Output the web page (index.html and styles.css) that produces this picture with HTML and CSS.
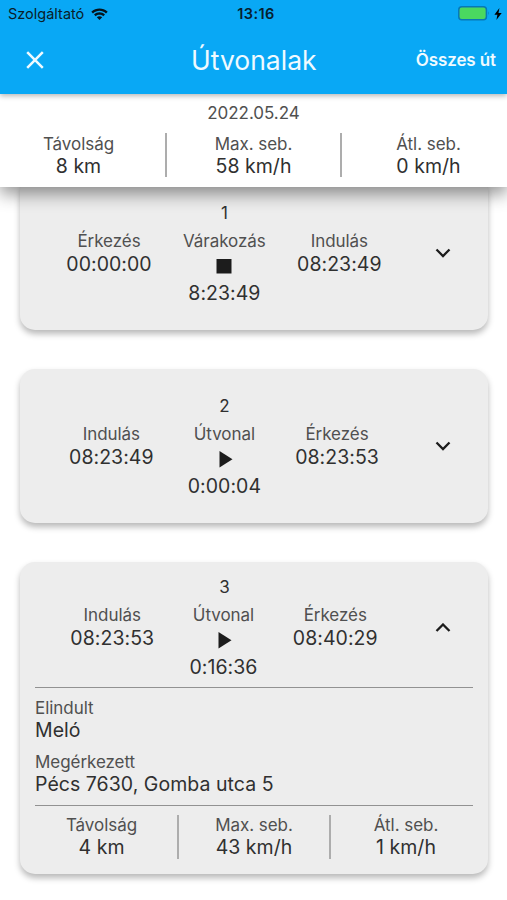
FILE: index.html
```html
<!DOCTYPE html>
<html lang="hu">
<head>
<meta charset="utf-8">
<meta name="viewport" content="width=device-width, initial-scale=1">
<title>Útvonalak</title>
<link rel="stylesheet" href="styles.css">
</head>
<body>
<div class="app">
  <header class="appbar">
    <div class="status">
      <div class="carrier"><span>Szolgáltató</span>
        <svg class="wifi" viewBox="0 0 17 12"><path d="M.3 3.700C5-.7 12-.7 16.700 3.700L15 5.400C11.300 2 5.700 2 2 5.400ZM3 6.500C6.200 3.600 10.800 3.600 14 6.500L12.300 8.200C10.100 6.300 6.900 6.300 4.700 8.200ZM5.800 9.200C7.400 7.900 9.600 7.900 11.200 9.200L8.500 11.900Z"/></svg>
      </div>
      <span class="clock">13:16</span>
      <div class="power">
        <svg class="battery" viewBox="0 0 32 15"><rect x=".8" y=".8" width="27.600" height="12.900" rx="3" fill="#4ad860" stroke="#0878b4" stroke-width="1.500"/><path d="M30 5.200Q31.600 7.200 30 9.200Z" fill="#0878b4"/></svg>
        <svg class="bolt" viewBox="0 0 8 12"><path d="M5.400 0L.4 6.800H3.400L2.400 12L7.700 5.100H4.500Z"/></svg>
      </div>
    </div>
    <div class="toolbar">
      <svg class="close" viewBox="0 0 18 18"><path d="M1.200 1.200L16.800 16.800M16.800 1.200L1.200 16.800"/></svg>
      <h1 class="title">Útvonalak</h1>
      <span class="action">Összes út</span>
    </div>
  </header>

  <section class="summary">
    <div class="label date">2022.05.24</div>
    <div class="stats stats-top">
      <div class="stat"><span class="label">Távolság</span><span class="value">8 km</span></div>
      <div class="stat"><span class="label">Max. seb.</span><span class="value">58 km/h</span></div>
      <div class="stat"><span class="label">Átl. seb.</span><span class="value">0 km/h</span></div>
    </div>
  </section>

  <main class="list">
    <article class="card">
      <div class="number">1</div>
      <div class="row">
        <div class="times">
          <div class="cell"><span class="label">Érkezés</span><span class="value">00:00:00</span></div>
          <div class="cell"><span class="label">Várakozás</span><svg class="mark" viewBox="0 0 24 24"><path d="M4.500 5H19.500V19.500H4.500Z"/></svg><span class="value">8:23:49</span></div>
          <div class="cell"><span class="label">Indulás</span><span class="value">08:23:49</span></div>
        </div>
        <svg class="chevron" viewBox="0 0 16 10"><path d="M1.500 1.500L8 8L14.500 1.500"/></svg>
      </div>
    </article>

    <article class="card">
      <div class="number">2</div>
      <div class="row">
        <div class="times">
          <div class="cell"><span class="label">Indulás</span><span class="value">08:23:49</span></div>
          <div class="cell"><span class="label">Útvonal</span><svg class="mark" viewBox="0 0 24 24"><path d="M7.500 4L20.500 12.200L7.500 20.500Z"/></svg><span class="value">0:00:04</span></div>
          <div class="cell"><span class="label">Érkezés</span><span class="value">08:23:53</span></div>
        </div>
        <svg class="chevron" viewBox="0 0 16 10"><path d="M1.500 1.500L8 8L14.500 1.500"/></svg>
      </div>
    </article>

    <article class="card open">
      <div class="number">3</div>
      <div class="row">
        <div class="times">
          <div class="cell"><span class="label">Indulás</span><span class="value">08:23:53</span></div>
          <div class="cell"><span class="label">Útvonal</span><svg class="mark" viewBox="0 0 24 24"><path d="M7.500 4L20.500 12.200L7.500 20.500Z"/></svg><span class="value">0:16:36</span></div>
          <div class="cell"><span class="label">Érkezés</span><span class="value">08:40:29</span></div>
        </div>
        <svg class="chevron" viewBox="0 0 16 10"><path d="M1.500 8L8 1.500L14.500 8"/></svg>
      </div>
      <div class="places">
        <div class="place"><span class="label">Elindult</span><span class="value">Meló</span></div>
        <div class="place"><span class="label">Megérkezett</span><span class="value">Pécs 7630, Gomba utca 5</span></div>
      </div>
      <div class="stats stats-card">
        <div class="stat"><span class="label">Távolság</span><span class="value">4 km</span></div>
        <div class="stat"><span class="label">Max. seb.</span><span class="value">43 km/h</span></div>
        <div class="stat"><span class="label">Átl. seb.</span><span class="value">1 km/h</span></div>
      </div>
    </article>
  </main>
</div>
</body>
</html>
```
FILE: styles.css
```css
* { box-sizing: border-box; }
body {
  margin: 0;
  background: #fff;
  color: #303030;
  font-family: Inter, "Liberation Sans", sans-serif;
}
svg { display: block; flex: none; }
.app { height: 900px; overflow: hidden; display: flex; flex-direction: column; }

.appbar {
  position: relative;
  z-index: 3;
  flex: none;
  height: 94px;
  background: #09a8f5;
  box-shadow: 0 2px 5px rgba(0, 0, 0, .28);
}
.status {
  height: 27px;
  padding: 0 5px 0 8px;
  display: grid;
  grid-template-columns: 1fr auto 1fr;
  align-items: center;
  color: #0a1d29;
  font-size: 14.500px;
}
.carrier { display: flex; align-items: center; gap: 7px; }
.wifi { width: 17px; height: 12px; fill: #05141d; }
.clock { padding-left: 2px; font-weight: 600; letter-spacing: .4px; color: #06202f; }
.power { display: flex; align-items: center; justify-content: flex-end; gap: 3px; }
.battery { width: 32px; height: 15px; margin-right: 1px; }
.bolt { width: 8px; height: 12px; }
.toolbar {
  height: 65px;
  padding: 0 11px 0 26px;
  display: grid;
  grid-template-columns: 165px auto 1fr;
  align-items: center;
  color: #effaff;
}
.close { width: 18px; height: 18px; stroke: #effaff; stroke-width: 2.500; fill: none; }
.title { margin: 0; font-size: 26.500px; font-weight: 400; }
.action { justify-self: end; font-size: 17px; font-weight: 600; letter-spacing: -.1px; }

.summary {
  position: relative;
  z-index: 2;
  flex: none;
  height: 93px;
  padding-top: 8px;
  background: #fff;
  box-shadow: 0 7px 16px rgba(0, 0, 0, .42);
}
.date { text-align: center; }
.label { font-size: 17px; line-height: 22px; letter-spacing: -.05px; color: #505050; white-space: nowrap; }
.value { font-size: 19.500px; line-height: 23px; letter-spacing: .04px; color: #303030; white-space: nowrap; }

.stats { display: grid; }
.stat { display: flex; flex-direction: column; align-items: center; height: 44px; }
.stat + .stat { border-left: 2px solid #adadad; }
.stats-top { grid-template-columns: 165px 175px 1fr; margin-top: 9px; }
.stats-top .stat:first-child { padding-right: 8px; }
.stats-top .stat:last-child { padding-left: 8px; }
.stats-card { grid-template-columns: 142px 152px 1fr; padding-top: 9px; }
.stats-card .stat { line-height: 22px; }
.stats-card .label { line-height: 21px; }
.stats-card .stat:first-child { padding-right: 9px; }
.stats-card .stat:last-child { padding-left: 8px; }

.list { padding: 0 19px 0 20px; margin-top: -11px; display: flex; flex-direction: column; gap: 39px; }
.card {
  height: 154px;
  flex: none;
  padding: 26px 15px 0;
  border-radius: 15px;
  background: #ededed;
  box-shadow: 0 4px 6px rgba(0, 0, 0, .28);
}
.card.open { height: 312px; padding-top: 14px; }
.number { text-align: center; width: 379px; font-size: 17px; line-height: 22px; }
.row { display: flex; padding-top: 6px; }
.times { flex: none; width: 378px; display: flex; justify-content: space-evenly; }
.cell { display: flex; flex-direction: column; align-items: center; }
.cell .value { line-height: 24px; }
.mark { width: 24px; height: 24px; margin: 2px 0 3px; fill: #1c1c1c; }
.chevron { width: 16px; height: 10px; margin: 18px 0 0 22px; fill: none; stroke: #1c1c1c; stroke-width: 2.300; }
.open .chevron { margin-top: 19px; }
.places {
  margin-top: 8px;
  padding: 9px 0;
  border-top: 1px solid #929292;
  border-bottom: 1px solid #929292;
  display: flex;
  flex-direction: column;
  gap: 9px;
}
.place { display: flex; flex-direction: column; }
```
